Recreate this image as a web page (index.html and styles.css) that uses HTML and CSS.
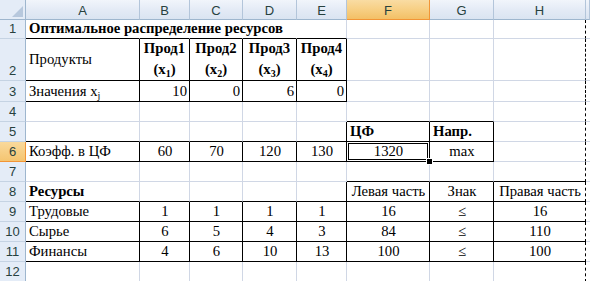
FILE: index.html
```html
<!DOCTYPE html>
<html lang="ru">
<head>
<meta charset="utf-8">
<title>Оптимальное распределение ресурсов</title>
<link rel="stylesheet" href="styles.css">
</head>
<body>
<div class="sheet">
  <!-- column headers -->
  <div class="corner"><svg width="11" height="11" viewBox="0 0 11 11"><polygon points="11,0 11,11 0,11" fill="#b7c8dd"/></svg></div>
  <div class="hc">A</div>
  <div class="hc">B</div>
  <div class="hc">C</div>
  <div class="hc">D</div>
  <div class="hc">E</div>
  <div class="hc sel">F</div>
  <div class="hc">G</div>
  <div class="hc">H</div>
  <div class="hc"></div>

  <!-- row 1 -->
  <div class="rh">1</div>
  <div class="c b bb nogrid">Оптимальное распределение ресурсов</div>
  <div class="c bb nogrid"></div>
  <div class="c bb nogrid"></div>
  <div class="c bb nogrid"></div>
  <div class="c bb"></div>
  <div class="c"></div>
  <div class="c"></div>
  <div class="c h"></div>
  <div class="c"></div>

  <!-- row 2 -->
  <div class="rh">2</div>
  <div class="c mid br bb">Продукты</div>
  <div class="c hd br bb"><span>Прод1</span><span>(x<sub>1</sub>)</span></div>
  <div class="c hd br bb"><span>Прод2</span><span>(x<sub>2</sub>)</span></div>
  <div class="c hd br bb"><span>Прод3</span><span>(x<sub>3</sub>)</span></div>
  <div class="c hd br bb"><span>Прод4</span><span>(x<sub>4</sub>)</span></div>
  <div class="c"></div>
  <div class="c"></div>
  <div class="c h"></div>
  <div class="c"></div>

  <!-- row 3 -->
  <div class="rh">3</div>
  <div class="c br bb"><span>Значения x<sub>j</sub></span></div>
  <div class="c r br bb">10</div>
  <div class="c r br bb">0</div>
  <div class="c r br bb">6</div>
  <div class="c r br bb">0</div>
  <div class="c"></div>
  <div class="c"></div>
  <div class="c h"></div>
  <div class="c"></div>

  <!-- row 4 -->
  <div class="rh">4</div>
  <div class="c"></div>
  <div class="c"></div>
  <div class="c"></div>
  <div class="c"></div>
  <div class="c"></div>
  <div class="c bb"></div>
  <div class="c bb"></div>
  <div class="c h"></div>
  <div class="c"></div>

  <!-- row 5 -->
  <div class="rh">5</div>
  <div class="c bb"></div>
  <div class="c bb"></div>
  <div class="c bb"></div>
  <div class="c bb"></div>
  <div class="c bb br"></div>
  <div class="c b br bb">ЦФ</div>
  <div class="c b br bb">Напр.</div>
  <div class="c h"></div>
  <div class="c"></div>

  <!-- row 6 -->
  <div class="rh sel">6</div>
  <div class="c br bb">Коэфф. в ЦФ</div>
  <div class="c ctr br bb">60</div>
  <div class="c ctr br bb">70</div>
  <div class="c ctr br bb">120</div>
  <div class="c ctr br bb">130</div>
  <div class="c ctr br bb active">1320<span class="handle"></span></div>
  <div class="c ctr br bb">max</div>
  <div class="c h"></div>
  <div class="c"></div>

  <!-- row 7 -->
  <div class="rh">7</div>
  <div class="c"></div>
  <div class="c"></div>
  <div class="c"></div>
  <div class="c"></div>
  <div class="c"></div>
  <div class="c bb"></div>
  <div class="c bb"></div>
  <div class="c h bb"></div>
  <div class="c"></div>

  <!-- row 8 -->
  <div class="rh">8</div>
  <div class="c b bb">Ресурсы</div>
  <div class="c bb"></div>
  <div class="c bb"></div>
  <div class="c bb"></div>
  <div class="c bb br"></div>
  <div class="c ctr br bb">Левая часть</div>
  <div class="c ctr br bb">Знак</div>
  <div class="c ctr h bb">Правая часть</div>
  <div class="c"></div>

  <!-- row 9 -->
  <div class="rh">9</div>
  <div class="c br bb">Трудовые</div>
  <div class="c ctr br bb">1</div>
  <div class="c ctr br bb">1</div>
  <div class="c ctr br bb">1</div>
  <div class="c ctr br bb">1</div>
  <div class="c ctr br bb">16</div>
  <div class="c ctr br bb">≤</div>
  <div class="c ctr h bb">16</div>
  <div class="c"></div>

  <!-- row 10 -->
  <div class="rh">10</div>
  <div class="c br bb">Сырье</div>
  <div class="c ctr br bb">6</div>
  <div class="c ctr br bb">5</div>
  <div class="c ctr br bb">4</div>
  <div class="c ctr br bb">3</div>
  <div class="c ctr br bb">84</div>
  <div class="c ctr br bb">≤</div>
  <div class="c ctr h bb">110</div>
  <div class="c"></div>

  <!-- row 11 -->
  <div class="rh">11</div>
  <div class="c br bb">Финансы</div>
  <div class="c ctr br bb">4</div>
  <div class="c ctr br bb">6</div>
  <div class="c ctr br bb">10</div>
  <div class="c ctr br bb">13</div>
  <div class="c ctr br bb">100</div>
  <div class="c ctr br bb">≤</div>
  <div class="c ctr h bb">100</div>
  <div class="c"></div>

  <!-- row 12 -->
  <div class="rh">12</div>
  <div class="c"></div>
  <div class="c"></div>
  <div class="c"></div>
  <div class="c"></div>
  <div class="c"></div>
  <div class="c"></div>
  <div class="c"></div>
  <div class="c h"></div>
  <div class="c"></div>
</div>
</body>
</html>
```

FILE: styles.css
```css
html, body {
  margin: 0;
  padding: 0;
  background: #fff;
  overflow: hidden;
}

.sheet {
  display: grid;
  grid-template-columns: 26px 114px 50px 53px 54px 50px 83px 64px 92px 4px;
  grid-template-rows: 20px 19px 42px 21px repeat(9, 20px);
  width: 590px;
  height: 281px;
  overflow: hidden;
}

.sheet > div {
  box-sizing: border-box;
  min-width: 0;
}

/* headers */
.corner {
  background: #e4ecf7;
  border-right: 1px solid #9eb6ce;
  border-bottom: 1px solid #9eb6ce;
  display: flex;
  align-items: flex-end;
  justify-content: flex-end;
  padding: 0 2px 2px 0;
}

.hc {
  background: linear-gradient(#f1f5fb, #e3eaf5 55%, #dae4f1);
  border-right: 1px solid #b3c5da;
  border-bottom: 1px solid #9eb6ce;
  font-family: "Liberation Sans", Arial, sans-serif;
  font-size: 13px;
  color: #27413e;
  display: flex;
  align-items: center;
  justify-content: center;
  padding-top: 1px;
}

.hc.sel {
  background: linear-gradient(#f9dca3, #f7cf84 50%, #f3c066);
  border-right: 1px solid #f29536;
  border-bottom: 1px solid #f29536;
}

.rh {
  background: #e4ecf7;
  border-right: 1px solid #9eb6ce;
  border-bottom: 1px solid #c5d3e3;
  font-family: "Liberation Sans", Arial, sans-serif;
  font-size: 13px;
  color: #27413e;
  display: flex;
  align-items: flex-end;
  justify-content: center;
  padding-bottom: 2px;
  line-height: 15px;
}

.rh.sel {
  background: linear-gradient(#f9d99b, #f5c571);
  border-right: 1px solid #f29536;
  border-bottom: 1px solid #f29536;
}

/* cells */
.c {
  border-right: 1px solid #d0d7e5;
  border-bottom: 1px solid #d0d7e5;
  font-family: "Liberation Serif", "Times New Roman", serif;
  font-size: 14.7px;
  line-height: 17px;
  color: #000;
  white-space: nowrap;
  display: flex;
  align-items: flex-end;
  padding: 0 2px 1px 3px;
}

.c.nogrid { border-right-color: transparent; }
.c.br { border-right-color: #000; }
.c.bb { border-bottom-color: #000; }
.c.h { border-right: 1px dashed #000; }

.b { font-weight: bold; }
.r { justify-content: flex-end; }
.ctr { justify-content: center; }
.mid { align-items: center; }

.hd {
  flex-direction: column;
  align-items: center;
  justify-content: center;
  font-weight: bold;
  line-height: 21px;
  padding: 0 0 1px;
}

sub {
  font-size: 10px;
  line-height: 0;
  vertical-align: -3px;
}

.active {
  position: relative;
  box-shadow: inset 0 0 0 1px #fff, inset 0 0 0 2px #000;
}

.handle {
  position: absolute;
  right: -4px;
  bottom: -4px;
  width: 5px;
  height: 5px;
  background: #000;
  border: 1px solid #fff;
  z-index: 2;
}
```
